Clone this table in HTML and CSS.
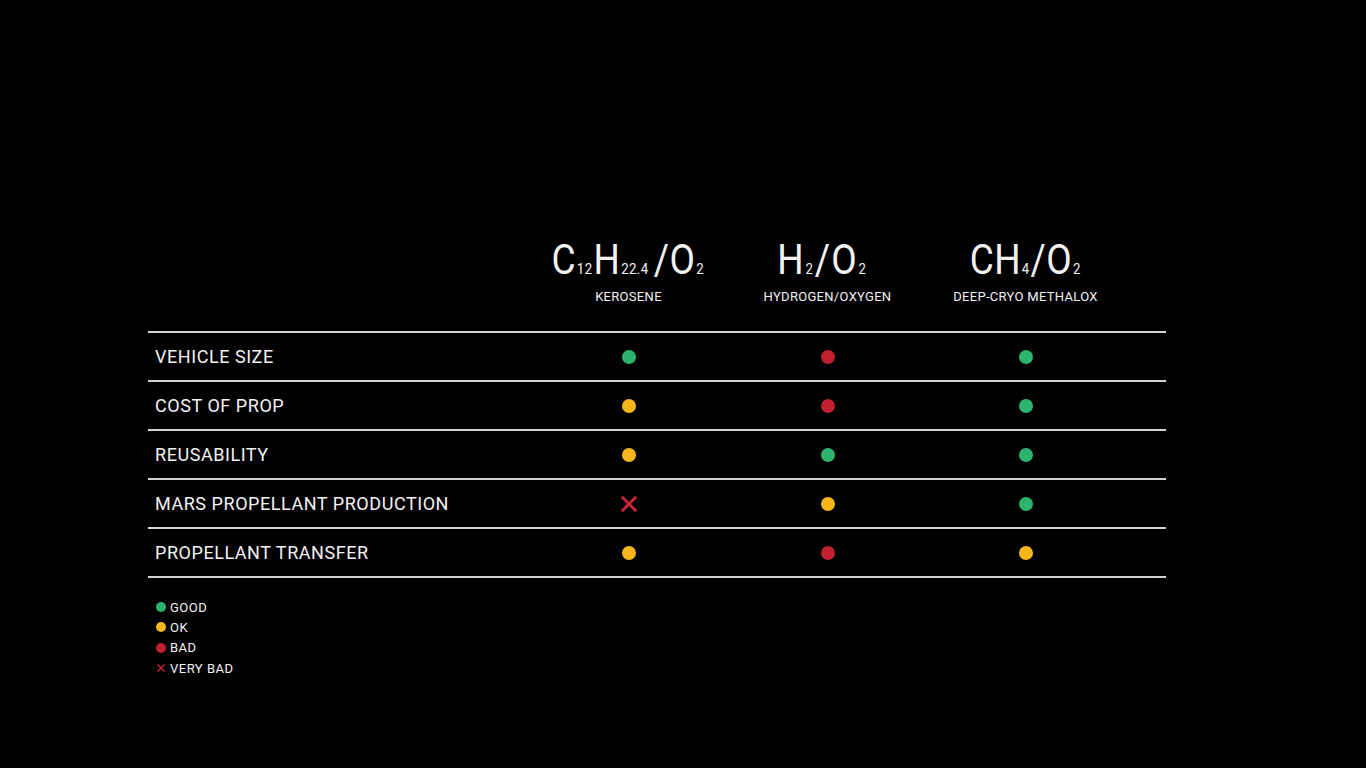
FILE: index.html
```html
<!DOCTYPE html>
<html>
<head>
<meta charset="utf-8">
<link rel="stylesheet" href="styles.css">
</head>
<body>
<main class="slide">
  <section class="chart">
    <div class="head">
      <div class="label-cell"></div>
      <div class="fuel">
        <div class="formula">C<span class="sub">12</span>H<span class="sub">22.4</span>&#8202;/O<span class="sub">2</span></div>
        <div class="name">KEROSENE</div>
      </div>
      <div class="fuel">
        <div class="formula formula-h2">H<span class="sub">2</span>/O<span class="sub">2</span></div>
        <div class="name">HYDROGEN/OXYGEN</div>
      </div>
      <div class="fuel">
        <div class="formula">CH<span class="sub">4</span>/O<span class="sub">2</span></div>
        <div class="name">DEEP-CRYO METHALOX</div>
      </div>
      <div></div>
    </div>
    <div class="table">
      <div class="row">
        <div class="label">VEHICLE SIZE</div>
        <div class="cell"><span class="dot good"></span></div>
        <div class="cell"><span class="dot bad"></span></div>
        <div class="cell"><span class="dot good"></span></div>
      </div>
      <div class="row">
        <div class="label">COST OF PROP</div>
        <div class="cell"><span class="dot ok"></span></div>
        <div class="cell"><span class="dot bad"></span></div>
        <div class="cell"><span class="dot good"></span></div>
      </div>
      <div class="row">
        <div class="label">REUSABILITY</div>
        <div class="cell"><span class="dot ok"></span></div>
        <div class="cell"><span class="dot good"></span></div>
        <div class="cell"><span class="dot good"></span></div>
      </div>
      <div class="row">
        <div class="label">MARS PROPELLANT PRODUCTION</div>
        <div class="cell"><svg class="cross" viewBox="0 0 20 20"><path d="M2 2L18 18M18 2L2 18"/></svg></div>
        <div class="cell"><span class="dot ok"></span></div>
        <div class="cell"><span class="dot good"></span></div>
      </div>
      <div class="row">
        <div class="label">PROPELLANT TRANSFER</div>
        <div class="cell"><span class="dot ok"></span></div>
        <div class="cell"><span class="dot bad"></span></div>
        <div class="cell"><span class="dot ok"></span></div>
      </div>
    </div>
    <ul class="legend">
      <li><span class="ldot good"></span>GOOD</li>
      <li><span class="ldot ok"></span>OK</li>
      <li><span class="ldot bad"></span>BAD</li>
      <li><svg class="lcross" viewBox="0 0 20 20"><path d="M3 3L17 17M17 3L3 17"/></svg>VERY BAD</li>
    </ul>
  </section>
</main>
</body>
</html>
```

FILE: styles.css
```css
html, body {
  margin: 0;
  padding: 0;
  background: #000;
}
body {
  width: 1366px;
  height: 768px;
  overflow: hidden;
  font-family: Roboto, "Liberation Sans", sans-serif;
  color: #f2f2f2;
}
.slide {
  padding: 237px 0 0 148px;
}
.chart {
  width: 1018px;
}
.head, .row {
  display: grid;
  grid-template-columns: 381px 199px 199px 197px 42px;
}
.head {
  height: 94px;
}
.fuel {
  display: flex;
  flex-direction: column;
  align-items: center;
}
.formula {
  font-size: 42px;
  line-height: 46px;
  font-weight: 400;
  letter-spacing: 0.5px;
  white-space: nowrap;
  transform: scaleX(0.88);
}
.formula-h2 {
  letter-spacing: 1.2px;
  margin-right: 10px;
}
.sub {
  font-size: 15px;
  margin: 0 1px;
}
.name {
  margin-top: -3px;
  font-size: 13px;
  line-height: 16px;
  letter-spacing: 0.3px;
}
.table {
  border-top: 2px solid #d4d4d4;
}
.row {
  height: 47px;
  border-bottom: 2px solid #d4d4d4;
  align-items: center;
}
.label {
  padding-left: 7px;
  font-size: 18px;
  letter-spacing: 0.55px;
}
.cell {
  display: flex;
  justify-content: center;
  align-items: center;
}
.dot {
  width: 14px;
  height: 14px;
  border-radius: 50%;
}
.good { background: #2cb46f; }
.ok { background: #f7b71c; }
.bad { background: #c0202f; }
.cross {
  width: 18px;
  height: 18px;
}
.cross path, .lcross path {
  stroke: #c8243a;
  stroke-width: 3.2;
  fill: none;
}
.legend {
  list-style: none;
  margin: 19px 0 0 8px;
  padding: 0;
}
.legend li {
  display: flex;
  align-items: center;
  height: 20.3px;
  font-size: 13px;
  letter-spacing: 0.5px;
}
.ldot {
  width: 10px;
  height: 10px;
  border-radius: 50%;
  margin-right: 4px;
}
.lcross {
  width: 10px;
  height: 10px;
  margin-right: 4px;
}
.lcross path {
  stroke-width: 3;
}
```
